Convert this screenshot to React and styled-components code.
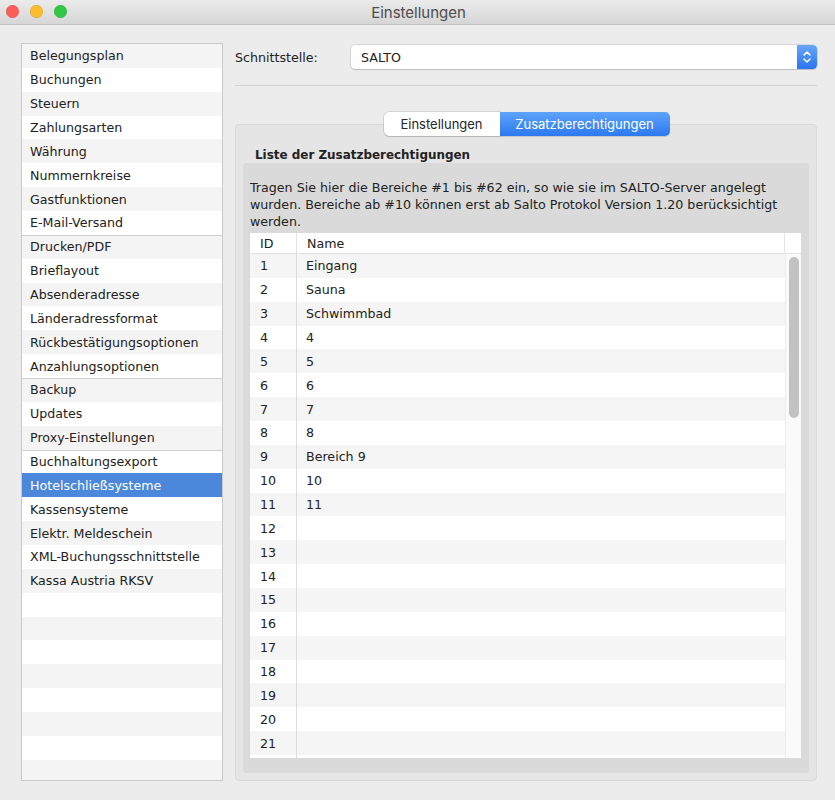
import React from 'react'
import styled, { createGlobalStyle } from 'styled-components'

const GlobalStyle = createGlobalStyle`
  html, body {
    margin: 0;
    padding: 0;
    background: #ececec;
  }
  body {
    font-family: "DejaVu Sans", sans-serif;
    color: #222;
  }
`;

const ROW = 23.86;

const Window = styled.div`
  width: 835px;
  height: 800px;
  display: flex;
  flex-direction: column;
  background: #ececec;
  overflow: hidden;
`;

const TitleBar = styled.div`
  position: relative;
  height: 24px;
  flex: none;
  display: flex;
  align-items: center;
  justify-content: center;
  background: linear-gradient(#ebebeb, #d6d6d6);
  border-bottom: 1px solid #c1c1c1;
`;

const Lights = styled.div`
  position: absolute;
  left: 6px;
  top: 5px;
  display: flex;
  gap: 11px;
`;

const Light = styled.span`
  width: 13px;
  height: 13px;
  border-radius: 50%;
  background: ${p => p.color};
  box-shadow: inset 0 0 0 0.5px rgba(0,0,0,0.15);
`;

const Title = styled.div`
  font-family: Inter, sans-serif;
  font-size: 15px;
  color: #4d4d4d;
  margin-left: 2px;
`;

const Body = styled.div`
  flex: 1;
  display: flex;
  gap: 12px;
  padding: 18px 18px 19px 21px;
  min-height: 0;
`;

const Sidebar = styled.div`
  width: 200px;
  flex: none;
  border: 1px solid #c9c9c9;
  background: #fff;
  display: flex;
  flex-direction: column;
  overflow: hidden;
`;

const NavItem = styled.div`
  height: ${ROW}px;
  flex: none;
  box-sizing: border-box;
  display: flex;
  align-items: center;
  padding-left: 8px;
  font-size: 12.65px;
  white-space: nowrap;
  background: ${p => (p.$selected ? '#4b87da' : p.$odd ? '#fff' : '#f4f4f4')};
  color: ${p => (p.$selected ? '#fff' : '#222')};
  box-shadow: ${p => (p.$sep ? 'inset 0 1px 0 #cfcfcf' : 'none')};
`;

const Main = styled.div`
  flex: 1;
  display: flex;
  flex-direction: column;
  padding-top: 2px;
  min-width: 0;
`;

const FieldRow = styled.div`
  display: flex;
  align-items: center;
`;

const Label = styled.div`
  width: 116px;
  font-size: 12.65px;
`;

const Select = styled.div`
  flex: 1;
  height: 24px;
  box-sizing: border-box;
  display: flex;
  align-items: center;
  background: #fff;
  border-radius: 4px;
  box-shadow: 0 0 0 0.5px rgba(0,0,0,0.18), 0 1px 1px rgba(0,0,0,0.12);
  font-size: 12.65px;
  padding-left: 10px;
  overflow: hidden;
`;

const SelectText = styled.span`
  flex: 1;
`;

const Stepper = styled.div`
  width: 20px;
  height: 24px;
  display: flex;
  align-items: center;
  justify-content: center;
  background: linear-gradient(#68a6f9, #2a74ef);
  border-radius: 0 4px 4px 0;
`;

const Rule = styled.div`
  height: 1px;
  background: #d4d4d4;
  margin-top: 16px;
`;

const Tabs = styled.div`
  display: flex;
  justify-content: center;
  margin-top: 26px;
  margin-bottom: -12px;
  position: relative;
  z-index: 1;
  margin-left: 1px;
`;

const Tab = styled.div`
  height: 24px;
  box-sizing: border-box;
  display: flex;
  align-items: center;
  justify-content: center;
  font-family: Inter, sans-serif;
  font-size: 13px;
  width: ${p => p.$w}px;
  color: ${p => (p.$active ? '#fff' : '#262626')};
  background: ${p => (p.$active ? 'linear-gradient(#5ea3fa, #2c79f0)' : '#fff')};
  border-radius: ${p => (p.$first ? '5px 0 0 5px' : '0 5px 5px 0')};
  box-shadow: ${p => (p.$active ? '0 1px 1px rgba(0,0,0,0.15)' : '0 0 0 0.5px rgba(0,0,0,0.2), 0 1px 1px rgba(0,0,0,0.12)')};
`;

const GroupBox = styled.div`
  flex: 1;
  display: flex;
  flex-direction: column;
  background: #e5e5e5;
  border: 1px solid #dadada;
  border-radius: 4px;
  padding: 22px 7px 7px 7px;
  min-height: 0;
`;

const Heading = styled.div`
  font-weight: bold;
  font-size: 11.95px;
  height: 16px;
  line-height: 16px;
  margin-left: 12px;
`;

const Inner = styled.div`
  flex: 1;
  display: flex;
  flex-direction: column;
  background: #dadada;
  border-radius: 4px;
  padding: 16px 8px 15px 7px;
  min-height: 0;
`;

const Description = styled.p`
  margin: 0 0 3px 0;
  font-size: 12.65px;
  line-height: 17px;
`;

const Table = styled.div`
  flex: 1;
  display: flex;
  flex-direction: column;
  background: #fff;
  min-height: 0;
  overflow: hidden;
`;

const HeaderRow = styled.div`
  display: flex;
  height: 20px;
  flex: none;
  border-bottom: 1px solid #e2e2e2;
  font-size: 12.65px;
  align-items: center;
`;

const HeadCell = styled.div`
  box-sizing: border-box;
  height: 100%;
  display: flex;
  align-items: center;
  width: ${p => (p.$w ? `${p.$w}px` : 'auto')};
  flex: ${p => (p.$w ? 'none' : 1)};
  padding-left: ${p => p.$pad}px;
  border-right: ${p => (p.$div ? '1px solid #e4e4e4' : 'none')};
  border-left: ${p => (p.$divLeft ? '1px solid #e4e4e4' : 'none')};
`;

const TableBody = styled.div`
  flex: 1;
  display: flex;
  min-height: 0;
`;

const Rows = styled.div`
  flex: 1;
  display: flex;
  flex-direction: column;
  overflow: hidden;
`;

const DataRow = styled.div`
  height: ${ROW}px;
  flex: none;
  display: flex;
  align-items: center;
  font-size: 12.65px;
  background: ${p => (p.$odd ? '#fff' : '#f5f5f5')};
`;

const IdCell = styled.div`
  width: 47px;
  height: 100%;
  box-sizing: border-box;
  display: flex;
  align-items: center;
  padding-left: 10px;
  border-right: 1px solid #dcdcdc;
`;

const IdFill = styled.div`
  width: 47px;
  flex: 1;
  box-sizing: border-box;
  border-right: 1px solid #dcdcdc;
`;

const NameCell = styled.div`
  flex: 1;
  padding-left: 9px;
`;

const ScrollTrack = styled.div`
  width: 16px;
  flex: none;
  background: #fafafa;
  border-left: 1px solid #ececec;
  padding: 3px 3px 0 3px;
  box-sizing: border-box;
`;

const Thumb = styled.div`
  width: 10px;
  height: 161px;
  border-radius: 5px;
  background: #c2c2c2;
`;

const nav = [
  'Belegungsplan', 'Buchungen', 'Steuern', 'Zahlungsarten', 'Währung',
  'Nummernkreise', 'Gastfunktionen', 'E-Mail-Versand', 'Drucken/PDF',
  'Brieflayout', 'Absenderadresse', 'Länderadressformat',
  'Rückbestätigungsoptionen', 'Anzahlungsoptionen', 'Backup', 'Updates',
  'Proxy-Einstellungen', 'Buchhaltungsexport', 'Hotelschließsysteme',
  'Kassensysteme', 'Elektr. Meldeschein', 'XML-Buchungsschnittstelle',
  'Kassa Austria RKSV',
];
const separators = [8, 14, 17];

const names = ['Eingang', 'Sauna', 'Schwimmbad', '4', '5', '6', '7', '8', 'Bereich 9', '10', '11'];

const Chevrons = () => (
  <svg width="10" height="16" viewBox="0 0 10 16" fill="none" stroke="#fff" strokeWidth="1.5" strokeLinecap="round" strokeLinejoin="round">
    <path d="M2 6 L5 3 L8 6" />
    <path d="M2 10 L5 13 L8 10" />
  </svg>
);

export default function App() {
  const navRows = [];
  for (let i = 0; i < 31; i++) {
    navRows.push(
      <NavItem key={i} $odd={i % 2 === 1} $selected={i === 18} $sep={separators.includes(i)}>
        {nav[i] || ''}
      </NavItem>
    );
  }

  const rows = [];
  for (let i = 0; i < 21; i++) {
    rows.push(
      <DataRow key={i} $odd={i % 2 === 1}>
        <IdCell>{i + 1}</IdCell>
        <NameCell>{names[i] || ''}</NameCell>
      </DataRow>
    );
  }

  return (
    <Window>
      <GlobalStyle />
      <TitleBar>
        <Lights>
          <Light color="#fc5f57" />
          <Light color="#fdbc2e" />
          <Light color="#33c748" />
        </Lights>
        <Title>Einstellungen</Title>
      </TitleBar>
      <Body>
        <Sidebar>{navRows}</Sidebar>
        <Main>
          <FieldRow>
            <Label>Schnittstelle:</Label>
            <Select>
              <SelectText>SALTO</SelectText>
              <Stepper><Chevrons /></Stepper>
            </Select>
          </FieldRow>
          <Rule />
          <Tabs>
            <Tab $first $w={116}>Einstellungen</Tab>
            <Tab $active $w={170}>Zusatzberechtigungen</Tab>
          </Tabs>
          <GroupBox>
            <Heading>Liste der Zusatzberechtigungen</Heading>
            <Inner>
              <Description>
                Tragen Sie hier die Bereiche #1 bis #62 ein, so wie sie im SALTO-Server angelegt<br />
                wurden. Bereiche ab #10 können erst ab Salto Protokol Version 1.20 berücksichtigt<br />
                werden.
              </Description>
              <Table>
                <HeaderRow>
                  <HeadCell $w={47} $pad={10} $div>ID</HeadCell>
                  <HeadCell $pad={10}>Name</HeadCell>
                  <HeadCell $w={17} $pad={0} $divLeft />
                </HeaderRow>
                <TableBody>
                  <Rows>
                    {rows}
                    <IdFill />
                  </Rows>
                  <ScrollTrack><Thumb /></ScrollTrack>
                </TableBody>
              </Table>
            </Inner>
          </GroupBox>
        </Main>
      </Body>
    </Window>
  );
}
